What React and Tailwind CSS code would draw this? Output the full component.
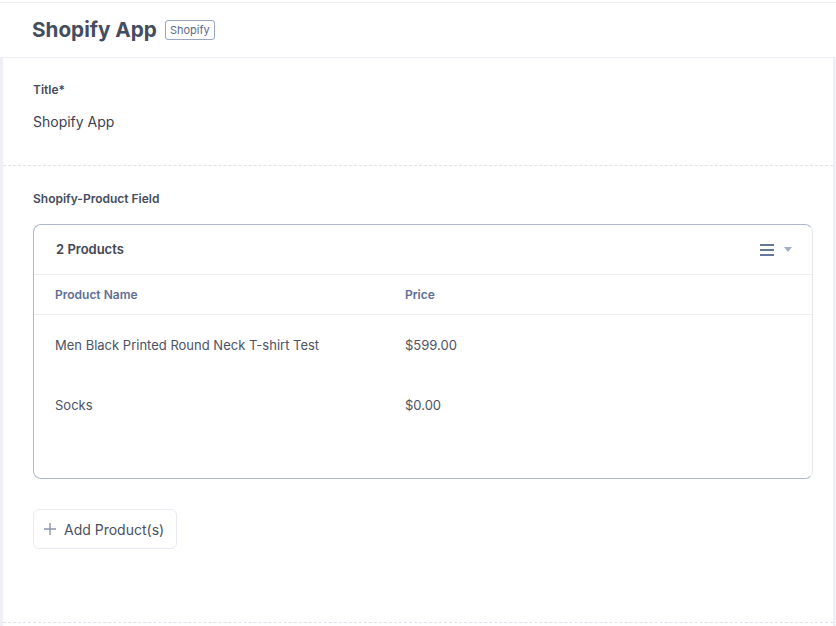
import React from "react";

const rows = [
  { name: "Men Black Printed Round Neck T-shirt Test", price: "$599.00" },
  { name: "Socks", price: "$0.00" },
];

const App = () => {
  return (
    <div
      className="w-[836px] h-[626px] bg-white overflow-hidden"
      style={{ fontFamily: "Inter, 'Noto Sans', sans-serif" }}
    >
      {/* Header */}
      <div className="mt-[2px] h-[56px] border-t border-b border-[#eceef4] flex items-center px-8">
        <h1 className="text-[20.7px] font-bold text-[#444d60] leading-none">Shopify App</h1>
        <span className="ml-2 border border-[#98a6c2] rounded-[3px] px-[4px] h-[20px] flex items-center text-[11px] text-[#5c6a88]">
          Shopify
        </span>
      </div>

      {/* Body */}
      <div className="flex h-[568px]">
        <div className="w-[3px] bg-[#eff0f5]" />
        <div className="flex-1 flex flex-col">
          {/* Title field */}
          <div className="h-[108px] border-b border-dashed border-[#dfe2ea] px-[30px] pt-[26px]">
            <div className="text-[12px] font-semibold text-[#454c5c] leading-none">Title*</div>
            <div className="mt-[19px] text-[14px] text-[#3b4252] leading-none">Shopify App</div>
          </div>

          {/* Product field */}
          <div className="flex-1 border-b border-dashed border-[#dfe2ea] pl-[30px] pr-[20px] pt-[27px]">
            <div className="text-[12px] font-semibold text-[#454c5c] leading-none">Shopify-Product Field</div>

            <div className="mt-[19px] h-[255px] border border-[#aeb9cf] border-r-[#e3e6ee] rounded-[8px] overflow-hidden">
              <div className="h-[50px] border-b border-[#eceef4] flex items-center justify-between pl-[22px] pr-[20px]">
                <span className="text-[13px] font-semibold text-[#3e4555]">2 Products</span>
                <div className="flex items-center gap-[10px]">
                  <svg width="14" height="12" viewBox="0 0 14 12">
                    <rect x="0" y="0" width="14" height="2" fill="#66789a" />
                    <rect x="0" y="5" width="14" height="2" fill="#66789a" />
                    <rect x="0" y="10" width="14" height="2" fill="#66789a" />
                  </svg>
                  <svg width="8" height="5" viewBox="0 0 8 5">
                    <path d="M0 0 L8 0 L4 5 Z" fill="#a3afc4" />
                  </svg>
                </div>
              </div>
              <div className="grid grid-cols-[350px_1fr] h-[40px] border-b border-[#eceef4] items-center px-[21px] text-[12px] font-semibold text-[#5f6f93]">
                <span>Product Name</span>
                <span>Price</span>
              </div>
              {rows.map((r) => (
                <div
                  key={r.name}
                  className="grid grid-cols-[350px_1fr] h-[60px] items-center px-[21px] pt-[2px] text-[13px] text-[#4c5364]"
                >
                  <span>{r.name}</span>
                  <span>{r.price}</span>
                </div>
              ))}
            </div>

            <button className="mt-[30px] h-[40px] pl-[10px] pr-[12px] border border-[#e8eaf2] rounded-[6px] flex items-center gap-[8px] text-[14px] text-[#4a5161]">
              <svg width="12" height="12" viewBox="0 0 12 12">
                <path d="M6 0 V12 M0 6 H12" stroke="#8a96ad" strokeWidth="1.4" />
              </svg>
              Add Product(s)
            </button>
          </div>
          <div className="h-[3px]" />
        </div>
        <div className="w-[3px] bg-[#eff0f5]" />
      </div>
    </div>
  );
};

export default App;
